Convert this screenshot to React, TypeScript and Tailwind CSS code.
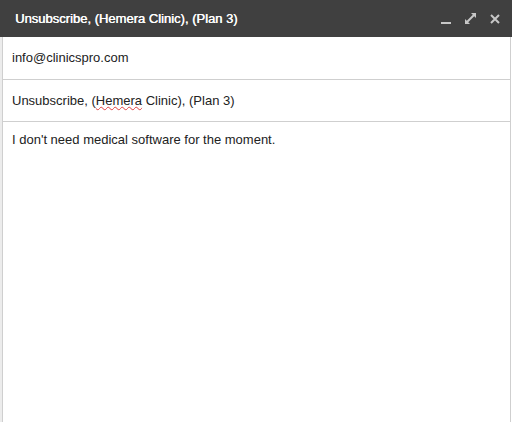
import React from 'react';

const Header = () => {
  return (
    <div className="flex items-center justify-between h-[37px] bg-[#404040] pl-[15px] pr-[11px]">
      <span className="text-[13px] text-white [text-shadow:0.4px_0_0_#fff]">Unsubscribe, (Hemera Clinic), (Plan 3)</span>
      <div className="flex items-center gap-[12px] text-[#c7c7c7]">
        <svg width="12" height="12" viewBox="0 0 12 12">
          <rect x="1" y="9" width="10" height="2" fill="currentColor" />
        </svg>
        <svg width="13" height="13" viewBox="0 0 13 13">
          <path d="M3 10L10 3" stroke="currentColor" strokeWidth="2" />
          <path d="M7 1h5v5z" fill="currentColor" />
          <path d="M1 7v5h5z" fill="currentColor" />
        </svg>
        <svg width="12" height="12" viewBox="0 0 12 12">
          <path d="M2 2l8 8M10 2l-8 8" stroke="currentColor" strokeWidth="2" />
        </svg>
      </div>
    </div>
  );
};

const App = () => {
  return (
    <div className="w-[512px] h-[422px] flex flex-col bg-white overflow-hidden" style={{ fontFamily: '"Liberation Sans", Arial, sans-serif' }}>
      <Header />
      <div className="flex flex-1">
        <div className="w-[2px] bg-[#ececec]" />
        <div className="flex-1 flex flex-col border-l border-r border-[#cfcfcf] text-[13px] text-[#222]">
          <div className="h-[43px] flex items-center pl-[9px] border-b border-[#cfcfcf]">info@clinicspro.com</div>
          <div className="h-[42px] flex items-center pl-[9px] border-b border-[#cfcfcf]">
            <span>
              Unsubscribe, (<span className="underline decoration-wavy decoration-[#e04040] decoration-1">Hemera</span> Clinic), (Plan 3)
            </span>
          </div>
          <div className="pl-[9px] pt-[8px]">I don't need medical software for the moment.</div>
        </div>
        <div className="w-[1px]" />
      </div>
    </div>
  );
};

export default App;
